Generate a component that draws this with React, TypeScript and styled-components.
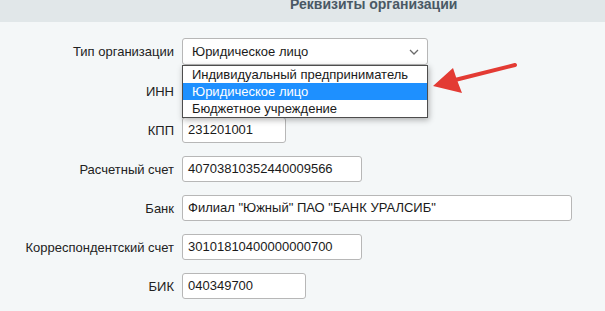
import React, { FC } from 'react';
import styled, { createGlobalStyle } from 'styled-components';

const GlobalStyle = createGlobalStyle`
    html, body {
        margin: 0;
        padding: 0;
        background: #f4f7f8;
        font-family: 'Liberation Sans', Arial, sans-serif;
    }
`;

type FieldType = {
    label: string;
    value: string;
    width: number;
};

const fields: FieldType[] = [
    { label: 'ИНН', value: '', width: 124 },
    { label: 'КПП', value: '231201001', width: 104 },
    { label: 'Расчетный счет', value: '40703810352440009566', width: 180 },
    { label: 'Банк', value: 'Филиал "Южный" ПАО "БАНК УРАЛСИБ"', width: 390 },
    { label: 'Корреспондентский счет', value: '30101810400000000700', width: 180 },
    { label: 'БИК', value: '040349700', width: 124 },
];

const options = ['Индивидуальный предприниматель', 'Юридическое лицо', 'Бюджетное учреждение'];

export const App: FC = () => {
    return (
        <Page>
            <GlobalStyle />
            <Header>
                <Title>Реквизиты организации</Title>
            </Header>
            <Form>
                <Row>
                    <Label>Тип организации</Label>
                    <SelectWrap>
                        <SelectBox>
                            <span>Юридическое лицо</span>
                            <svg width="10" height="6" viewBox="0 0 10 6">
                                <path d="M1 1 L5 5 L9 1" fill="none" stroke="#6b6b6b" strokeWidth="1.3" />
                            </svg>
                        </SelectBox>
                        <Dropdown>
                            {options.map((o) => (
                                <Option key={o} $active={o === 'Юридическое лицо'}>
                                    {o}
                                </Option>
                            ))}
                        </Dropdown>
                    </SelectWrap>
                </Row>
                {fields.map((f) => (
                    <Row key={f.label}>
                        <Label>{f.label}</Label>
                        <Input $width={f.width}>{f.value}</Input>
                    </Row>
                ))}
            </Form>
            <Pointer width="95" height="45" viewBox="0 0 95 45">
                <line x1="30" y1="25" x2="90" y2="10" stroke="#e33b34" strokeWidth="4" strokeLinecap="round" />
                <polygon points="8,31 28,13 32,25 37,38" fill="#e33b34" />
            </Pointer>
        </Page>
    );
};

export default App;

const Page = styled.div`
    position: relative;
    width: 605px;
    height: 311px;
    overflow: hidden;
`;

const Header = styled.div`
    height: 22px;
    background: #e1e7e9;
    padding-left: 290px;
    overflow: hidden;
`;

const Title = styled.div`
    margin-top: -3px;
    font-size: 14px;
    line-height: 14px;
    font-weight: 700;
    color: #4a5965;
`;

const Form = styled.div`
    display: flex;
    flex-direction: column;
    gap: 13px;
    padding-top: 16px;
`;

const Row = styled.div`
    display: flex;
    align-items: center;
    gap: 8px;
`;

const Label = styled.div`
    width: 174px;
    text-align: right;
    font-size: 13px;
    color: #222;
`;

const Input = styled.div<{ $width: number }>`
    box-sizing: border-box;
    width: ${(p) => p.$width}px;
    height: 26px;
    padding: 0 5px;
    background: #fff;
    border: 1px solid #b7b7b7;
    border-radius: 3px;
    font-size: 13px;
    line-height: 24px;
    color: #1a1a1a;
    white-space: nowrap;
`;

const SelectWrap = styled.div`
    position: relative;
`;

const SelectBox = styled.div`
    box-sizing: border-box;
    width: 246px;
    height: 27px;
    padding: 0 8px 0 9px;
    display: flex;
    align-items: center;
    justify-content: space-between;
    background: #fff;
    border: 1px solid #b7b7b7;
    border-radius: 3px;
    font-size: 13px;
    color: #1a1a1a;
`;

const Dropdown = styled.div`
    position: absolute;
    left: 0;
    top: 100%;
    z-index: 5;
    box-sizing: border-box;
    width: 246px;
    background: #fff;
    border: 1px solid #4d4d4d;
    box-shadow: 1px 2px 6px rgba(0, 0, 0, 0.3);
`;

const Option = styled.div<{ $active?: boolean }>`
    height: 17px;
    padding-left: 9px;
    font-size: 13px;
    line-height: 17px;
    color: ${(p) => (p.$active ? '#fff' : '#1a1a1a')};
    background: ${(p) => (p.$active ? '#1e90ff' : '#fff')};
    white-space: nowrap;
`;

const Pointer = styled.svg`
    position: absolute;
    left: 425px;
    top: 55px;
    z-index: 6;
`;
